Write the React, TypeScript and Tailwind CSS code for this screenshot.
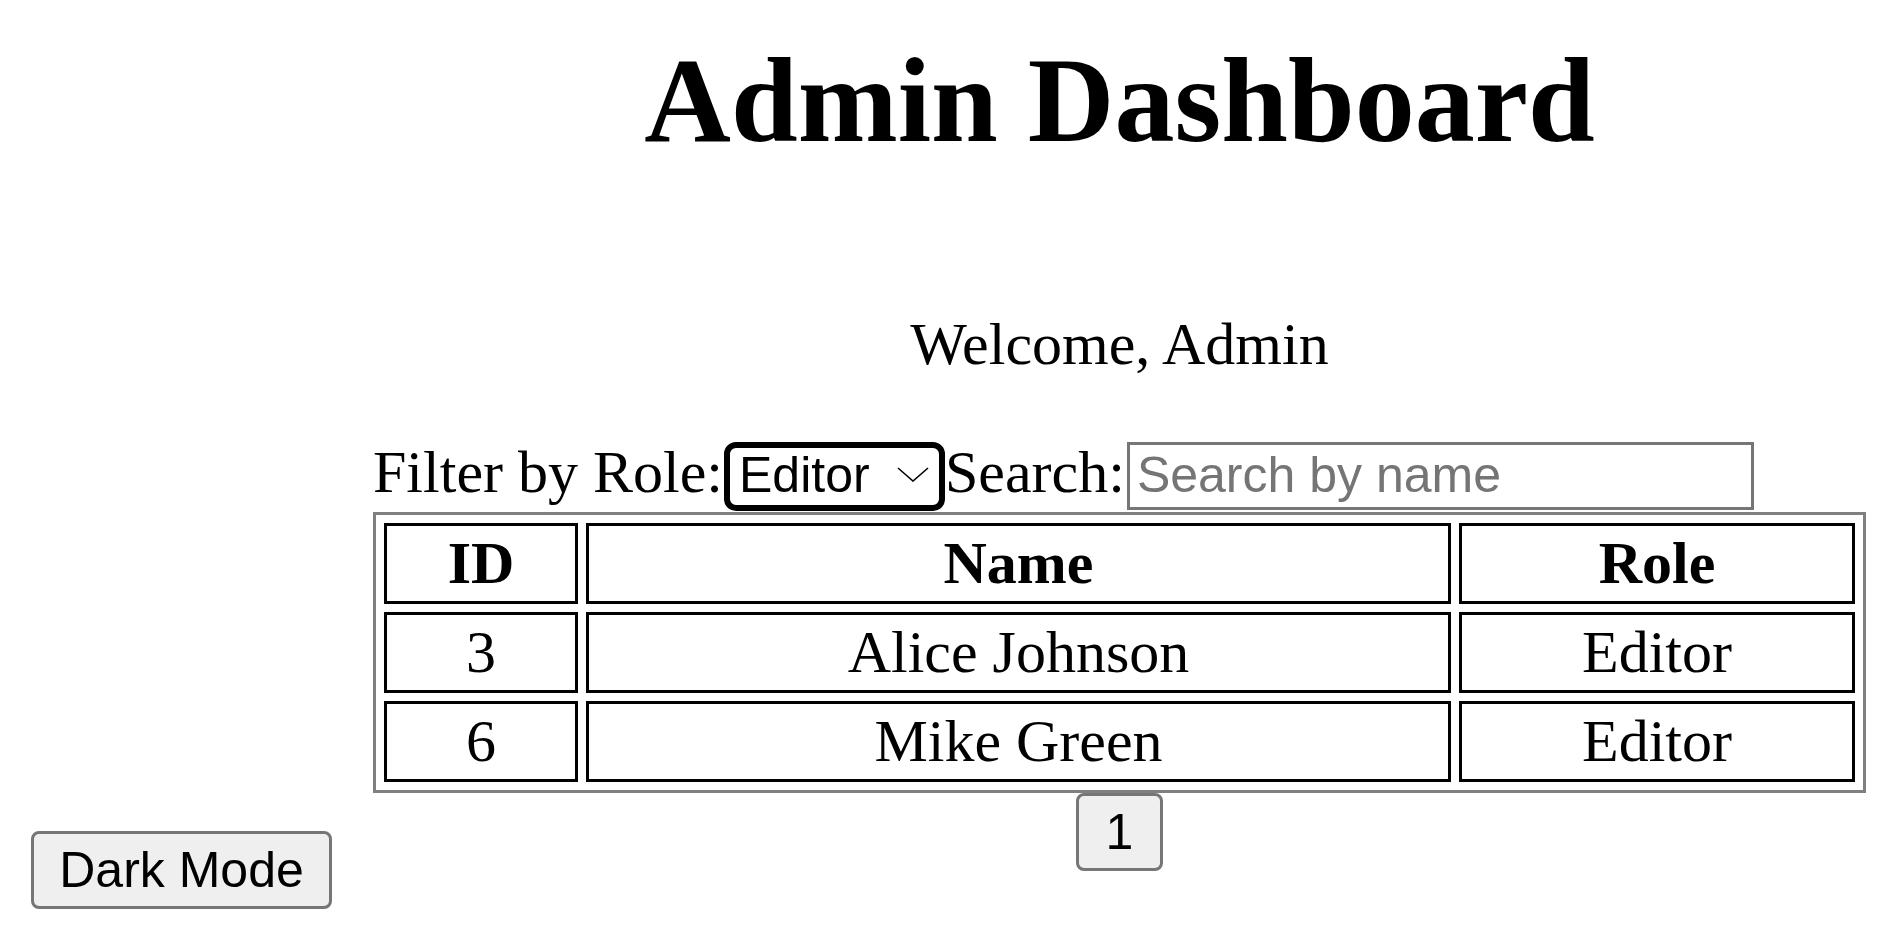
import React from "react";

const rows = [
  { id: 3, name: "Alice Johnson", role: "Editor" },
  { id: 6, name: "Mike Green", role: "Editor" },
];

export default function App() {
  return (
    <div className="flex items-end gap-[41px] pl-[31px] bg-white text-black font-['Liberation_Serif','Times_New_Roman',serif]">
      <button className="self-end shrink-0 w-[301px] py-[7px] leading-[58px] text-[50px] font-['Liberation_Sans',Arial,sans-serif] bg-[#efefef] border-[3px] border-[#767676] rounded-[8px] text-black">
        Dark Mode
      </button>
      <main className="w-[1493px] shrink-0 pt-[32px] pb-[38px]">
        <h1 className="text-center text-[120px] leading-[138px] font-bold">Admin Dashboard</h1>
        <p className="mt-[140px] text-center text-[60px] leading-[69px]">Welcome, Admin</p>
        <div className="mt-[59px] flex items-baseline">
          <label className="text-[60px] leading-[69px]">Filter by Role:</label>
          <div className="ml-[1px] flex items-start w-[221px] h-[69px] border-[6px] border-black rounded-[12px] pl-[9px] pr-[10px] font-['Liberation_Sans',Arial,sans-serif] text-[50px] leading-[54px]">
            <span className="flex-1">Editor</span>
            <svg width="32" height="15" viewBox="0 0 32 15" className="mt-[19px]" fill="none">
              <path d="M1 1 L16 14 L31 1" stroke="#000" strokeWidth="1.6" />
            </svg>
          </div>
          <label className="text-[60px] leading-[69px]">Search:</label>
          <input
            type="text"
            placeholder="Search by name"
            className="ml-[2px] w-[627px] h-[68px] pl-[7px] pr-[8px] border-[3px] border-[#767676] bg-white text-[50px] font-['Liberation_Sans',Arial,sans-serif] placeholder:text-[#757575] outline-none"
          />
        </div>
        <table className="mt-[1px] w-[1493px] table-fixed border-separate border-spacing-[8px] border-[3px] border-[#808080] text-[60px] leading-[69px]">
          <thead>
            <tr>
              <th className="w-[194px] border-[3px] border-black py-[3px] px-0 text-center font-bold">ID</th>
              <th className="w-[865px] border-[3px] border-black py-[3px] px-0 text-center font-bold">Name</th>
              <th className="border-[3px] border-black py-[3px] px-0 text-center font-bold">Role</th>
            </tr>
          </thead>
          <tbody>
            {rows.map((r) => (
              <tr key={r.id}>
                <td className="border-[3px] border-black py-[3px] px-0 text-center">{r.id}</td>
                <td className="border-[3px] border-black py-[3px] px-0 text-center">{r.name}</td>
                <td className="border-[3px] border-black py-[3px] px-0 text-center">{r.role}</td>
              </tr>
            ))}
          </tbody>
        </table>
        <div className="flex justify-center">
          <button className="w-[87px] py-[7px] leading-[58px] text-[50px] font-['Liberation_Sans',Arial,sans-serif] bg-[#efefef] border-[3px] border-[#767676] rounded-[8px] text-black">
            1
          </button>
        </div>
      </main>
    </div>
  );
}
